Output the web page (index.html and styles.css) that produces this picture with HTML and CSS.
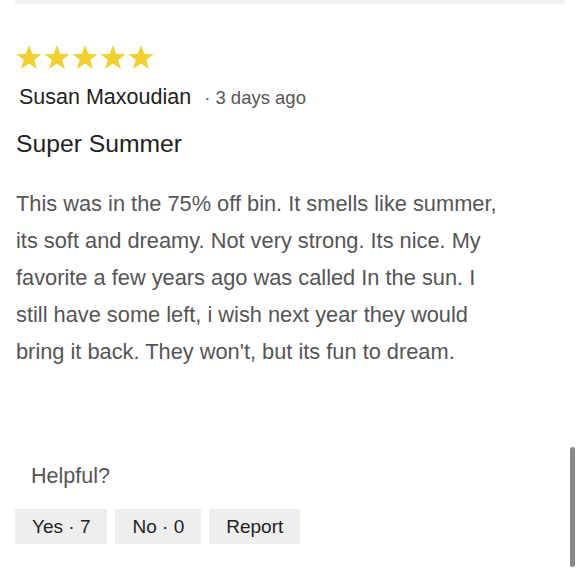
FILE: index.html
```html
<!DOCTYPE html>
<html>
<head>
<meta charset="utf-8">
<link rel="stylesheet" href="styles.css">
</head>
<body>
<div class="page">
  <div class="divider"></div>
  <div class="review">
    <div class="stars">
      <svg class="star" viewBox="0 0 24 23"><polygon points="12,0 15.1,8.2 23.6,8.4 16.9,13.6 19.3,22 12,17 4.7,22 7.1,13.6 0.4,8.4 8.9,8.2"/></svg>
      <svg class="star" viewBox="0 0 24 23"><polygon points="12,0 15.1,8.2 23.6,8.4 16.9,13.6 19.3,22 12,17 4.7,22 7.1,13.6 0.4,8.4 8.9,8.2"/></svg>
      <svg class="star" viewBox="0 0 24 23"><polygon points="12,0 15.1,8.2 23.6,8.4 16.9,13.6 19.3,22 12,17 4.7,22 7.1,13.6 0.4,8.4 8.9,8.2"/></svg>
      <svg class="star" viewBox="0 0 24 23"><polygon points="12,0 15.1,8.2 23.6,8.4 16.9,13.6 19.3,22 12,17 4.7,22 7.1,13.6 0.4,8.4 8.9,8.2"/></svg>
      <svg class="star" viewBox="0 0 24 23"><polygon points="12,0 15.1,8.2 23.6,8.4 16.9,13.6 19.3,22 12,17 4.7,22 7.1,13.6 0.4,8.4 8.9,8.2"/></svg>
    </div>
    <div class="meta"><span class="author">Susan Maxoudian</span><span class="date">· 3 days ago</span></div>
    <h2 class="title">Super Summer</h2>
    <p class="body">This was in the 75% off bin. It smells like summer, its soft and dreamy. Not very strong. Its nice. My favorite a few years ago was called In the sun. I still have some left, i wish next year they would bring it back. They won't, but its fun to dream.</p>
    <div class="helpful">Helpful?</div>
    <div class="actions">
      <button class="btn">Yes · 7</button>
      <button class="btn">No · 0</button>
      <button class="btn">Report</button>
    </div>
  </div>
</div>
<div class="scrollbar"></div>
</body>
</html>
```
FILE: styles.css
```css
html, body {
  margin: 0;
  padding: 0;
  background: #fff;
}
body {
  font-family: "Liberation Sans", Arial, sans-serif;
  width: 580px;
  height: 580px;
  overflow: hidden;
  position: relative;
}
.divider {
  height: 4px;
  margin: 0 15px;
  background: #f2f2f2;
}
.review {
  padding: 0 16px;
}
.stars {
  display: flex;
  gap: 2px;
  margin-top: 41px;
  height: 26px;
}
.star {
  width: 26px;
  height: 25px;
  fill: #f2d12f;
}
.meta {
  margin-top: 14px;
  padding-left: 3px;
  line-height: 24px;
  display: flex;
  align-items: baseline;
}
.author {
  font-size: 21.5px;
  color: #222;
}
.date {
  font-size: 18.5px;
  color: #555;
  margin-left: 13px;
}
.title {
  margin: 20px 0 0;
  font-size: 24.7px;
  font-weight: normal;
  line-height: 28px;
  color: #222;
}
.body {
  margin: 27px 0 0;
  font-size: 21.8px;
  line-height: 37px;
  color: #555;
  width: 485px;
}
.helpful {
  margin-top: 94px;
  padding-left: 15px;
  font-size: 21.5px;
  line-height: 24px;
  color: #555;
}
.actions {
  margin-top: 21px;
  display: flex;
  gap: 8px;
  margin-left: -1px;
}
.btn {
  font-family: "Liberation Sans", Arial, sans-serif;
  font-size: 19px;
  color: #222;
  background: #eeeeee;
  border: none;
  height: 35px;
  padding: 0 17px;
  line-height: 35px;
}
.scrollbar {
  position: absolute;
  left: 570px;
  top: 447px;
  width: 5px;
  height: 120px;
  border-radius: 3px;
  background: #888;
}
```
